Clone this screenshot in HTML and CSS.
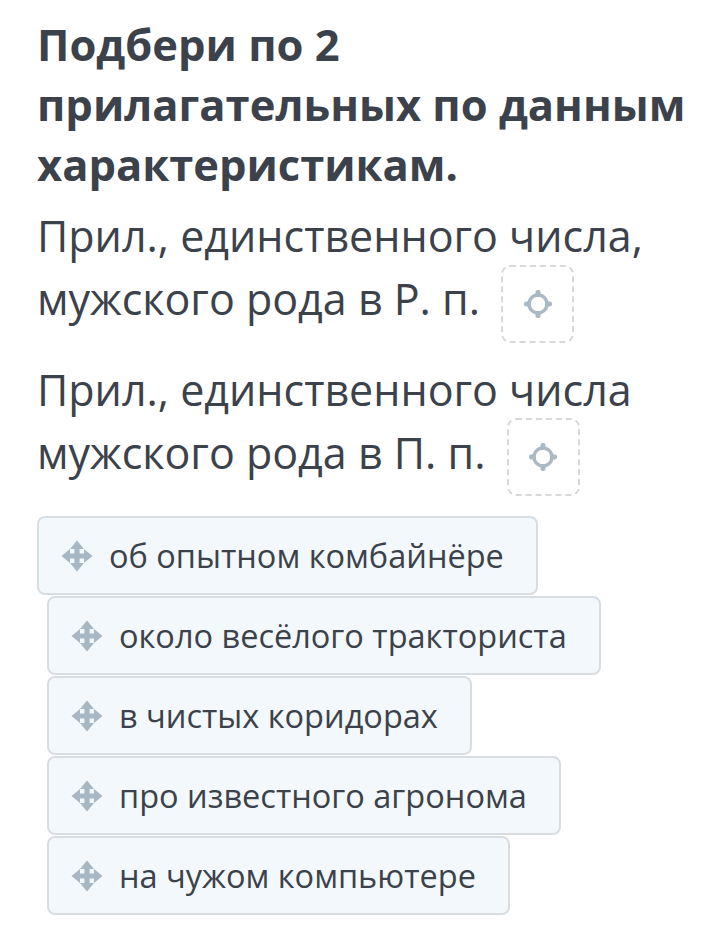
FILE: index.html
```html
<!DOCTYPE html>
<html lang="ru">
<head>
  <meta charset="UTF-8" />
  <meta name="viewport" content="width=device-width, initial-scale=1.0" />
  <title>Подбери прилагательные</title>
  <link rel="stylesheet" href="styles.css">
</head>
<body>
  <main class="task">
    <h1 class="task-title">Подбери по 2 прилагательных по данным характеристикам.</h1>

    <p class="line">Прил., единственного числа, мужского рода в Р. п.
      <span class="drop">
        <svg class="target" viewBox="0 0 30 30" width="30" height="30">
          <circle cx="15" cy="15" r="9" fill="none" stroke="#a9b9c6" stroke-width="3.4"/>
          <rect x="12.5" y="1" width="5" height="7" rx="2" fill="#a9b9c6"/>
          <rect x="12.5" y="22" width="5" height="7" rx="2" fill="#a9b9c6"/>
          <rect x="1" y="12.5" width="7" height="5" rx="2" fill="#a9b9c6"/>
          <rect x="22" y="12.5" width="7" height="5" rx="2" fill="#a9b9c6"/>
        </svg>
      </span>
    </p>

    <p class="line">Прил., единственного числа мужского рода в П. п.
      <span class="drop">
        <svg class="target" viewBox="0 0 30 30" width="30" height="30">
          <circle cx="15" cy="15" r="9" fill="none" stroke="#a9b9c6" stroke-width="3.4"/>
          <rect x="12.5" y="1" width="5" height="7" rx="2" fill="#a9b9c6"/>
          <rect x="12.5" y="22" width="5" height="7" rx="2" fill="#a9b9c6"/>
          <rect x="1" y="12.5" width="7" height="5" rx="2" fill="#a9b9c6"/>
          <rect x="22" y="12.5" width="7" height="5" rx="2" fill="#a9b9c6"/>
        </svg>
      </span>
    </p>

    <ul class="options">
      <li class="option first">
        <svg class="move" viewBox="0 0 32 32" width="32" height="32">
          <path d="M16 0.5 L23 9 H18.6 V13.4 H23 V9 L31.5 16 L23 23 V18.6 H18.6 V23 H23 L16 31.5 L9 23 H13.4 V18.6 H9 V23 L0.5 16 L9 9 V13.4 H13.4 V9 H9 Z" fill="#a7b7c4"/>
        </svg>
        об опытном комбайнёре
      </li>
      <li class="option">
        <svg class="move" viewBox="0 0 32 32" width="32" height="32">
          <path d="M16 0.5 L23 9 H18.6 V13.4 H23 V9 L31.5 16 L23 23 V18.6 H18.6 V23 H23 L16 31.5 L9 23 H13.4 V18.6 H9 V23 L0.5 16 L9 9 V13.4 H13.4 V9 H9 Z" fill="#a7b7c4"/>
        </svg>
        около весёлого тракториста
      </li>
      <li class="option">
        <svg class="move" viewBox="0 0 32 32" width="32" height="32">
          <path d="M16 0.5 L23 9 H18.6 V13.4 H23 V9 L31.5 16 L23 23 V18.6 H18.6 V23 H23 L16 31.5 L9 23 H13.4 V18.6 H9 V23 L0.5 16 L9 9 V13.4 H13.4 V9 H9 Z" fill="#a7b7c4"/>
        </svg>
        в чистых коридорах
      </li>
      <li class="option">
        <svg class="move" viewBox="0 0 32 32" width="32" height="32">
          <path d="M16 0.5 L23 9 H18.6 V13.4 H23 V9 L31.5 16 L23 23 V18.6 H18.6 V23 H23 L16 31.5 L9 23 H13.4 V18.6 H9 V23 L0.5 16 L9 9 V13.4 H13.4 V9 H9 Z" fill="#a7b7c4"/>
        </svg>
        про известного агронома
      </li>
      <li class="option">
        <svg class="move" viewBox="0 0 32 32" width="32" height="32">
          <path d="M16 0.5 L23 9 H18.6 V13.4 H23 V9 L31.5 16 L23 23 V18.6 H18.6 V23 H23 L16 31.5 L9 23 H13.4 V18.6 H9 V23 L0.5 16 L9 9 V13.4 H13.4 V9 H9 Z" fill="#a7b7c4"/>
        </svg>
        на чужом компьютере
      </li>
    </ul>
  </main>
</body>
</html>
```

FILE: styles.css
```css
body {
  margin: 0;
  font-family: 'Open Sans', sans-serif;
  background: #fff;
  color: #3b424b;
}

.task {
  padding: 15px 20px 0 37px;
}

.task-title {
  font-size: 43.5px;
  font-weight: 700;
  line-height: 60px;
  margin: 0 0 9px;
}

.line {
  font-size: 43px;
  line-height: 63px;
  margin: 0 0 27px;
}

.drop {
  display: inline-flex;
  align-items: center;
  justify-content: center;
  width: 69px;
  height: 74px;
  margin: -12px 0 -12px 10px;
  border: 2px dashed #d6d9dc;
  border-radius: 9px;
  vertical-align: middle;
}

.options {
  list-style: none;
  margin: 32px 0 0;
  padding: 0;
}

.option {
  display: flex;
  align-items: center;
  width: fit-content;
  box-sizing: border-box;
  height: 79px;
  margin: 0 0 1px 10px;
  padding: 0 32px 0 22px;
  background: #f3f8fc;
  border: 2px solid #d8dde2;
  border-radius: 8px;
  font-size: 32.5px;
}

.option.first {
  margin-left: 0;
}

.move {
  margin-right: 16px;
  flex-shrink: 0;
}
```
